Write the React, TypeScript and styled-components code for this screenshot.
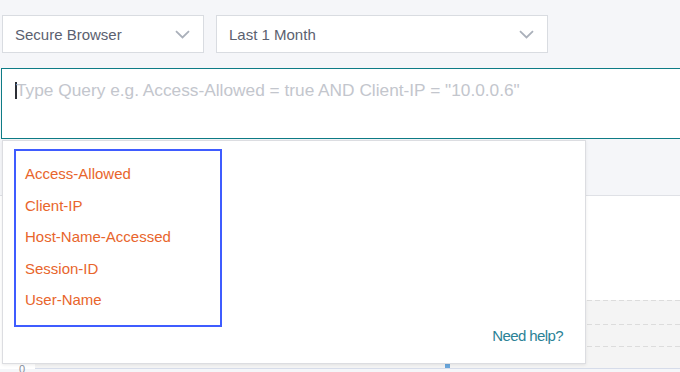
import styled, { createGlobalStyle } from "styled-components";

const GlobalStyle = createGlobalStyle`
  html, body {
    margin: 0;
    padding: 0;
    background-color: #f5f6f9;
    font-family: "Liberation Sans", Arial, sans-serif;
    overflow: hidden;
  }
  * {
    box-sizing: border-box;
  }
`

const Page = styled.div`
  width: 680px;
  height: 372px;
  padding-top: 15px;
  overflow: hidden;
  position: relative;
`

const FilterRow = styled.div`
  display: flex;
  gap: 12px;
  padding-left: 2px;
`

const Select = styled.div<{ $width: number }>`
  width: ${(p) => p.$width}px;
  height: 38px;
  background-color: #fff;
  border: 1px solid #d9dce1;
  padding: 0 13px 0 12px;
  display: flex;
  align-items: center;
  justify-content: space-between;
  font-size: 15px;
  color: #5b6170;
`

const Chevron = () => (
  <svg width="15" height="9" viewBox="0 0 15 9">
    <path d="M1 1.2 L7.5 7.4 L14 1.2" fill="none" stroke="#aab0ba" strokeWidth="1.8" />
  </svg>
)

const QueryArea = styled.div`
  position: relative;
  margin-top: 15px;
`

const QueryBox = styled.div`
  height: 71px;
  margin-left: 1px;
  margin-right: -4px;
  background-color: #fff;
  border: 1px solid #0e7c86;
  padding: 11px 0 0 13px;
  display: flex;
  align-items: flex-start;
  font-size: 17.3px;
  line-height: 21px;
  color: #c3c6cd;
  white-space: nowrap;
`

const Caret = styled.span`
  display: inline-block;
  width: 2px;
  height: 17px;
  margin-top: 2px;
  margin-right: -1px;
  background-color: #2c2f36;
`

const Band = styled.div`
  height: 57px;
  border-bottom: 1px solid #dfe1e6;
`

const ChartPanel = styled.div`
  background-color: #fff;
  padding-top: 104px;
`

const Grid = styled.div`
  position: relative;
  margin-left: 35px;
  background-color: #f4f4f4;
  height: 69px;
  border-bottom: 1px solid #d6dcea;
`

const GridLine = styled.div<{ $top: number }>`
  position: absolute;
  left: 0;
  right: 0;
  top: ${(p) => p.$top}px;
  height: 1px;
  background-image: linear-gradient(to right, #dcdcdc 0 5px, transparent 5px 8px);
  background-size: 8px 1px;
`

const AxisLabel = styled.span`
  position: absolute;
  left: -16px;
  top: 63px;
  font-size: 11px;
  line-height: 13px;
  color: #8a90a0;
`

const BarTip = styled.div`
  position: absolute;
  left: 410px;
  bottom: 0;
  width: 5px;
  height: 4px;
  background-color: #6aa7dc;
`

const Popup = styled.div`
  position: absolute;
  top: 72px;
  left: 2px;
  width: 584px;
  height: 224px;
  background-color: #fff;
  border: 1px solid #dcdde1;
  box-shadow: 0 1px 3px rgba(0, 0, 0, 0.08);
  padding: 8px 22px 19px 11px;
  display: flex;
  flex-direction: column;
  align-items: flex-start;
  z-index: 2;
`

const FieldList = styled.ul`
  list-style: none;
  margin: 0;
  width: 208px;
  height: 187px;
  border: 2px solid #3f5cff;
  padding: 7px 0 0 9px;
`

const FieldItem = styled.li`
  font-size: 15px;
  line-height: 31.5px;
  color: #e8652c;
`

const HelpLink = styled.a`
  align-self: flex-end;
  margin-top: auto;
  font-size: 15px;
  letter-spacing: -0.6px;
  color: #2b8296;
  text-decoration: none;
`

const fields = ["Access-Allowed", "Client-IP", "Host-Name-Accessed", "Session-ID", "User-Name"]

const App = () => {
  return (
    <>
      <GlobalStyle />
      <Page>
        <FilterRow>
          <Select $width={202}>
            Secure Browser
            <Chevron />
          </Select>
          <Select $width={332}>
            Last 1 Month
            <Chevron />
          </Select>
        </FilterRow>
        <QueryArea>
          <QueryBox>
            <Caret />
            Type Query e.g. Access-Allowed = true AND Client-IP = "10.0.0.6"
          </QueryBox>
          <Band />
          <ChartPanel>
            <Grid>
              <GridLine $top={0} />
              <GridLine $top={24} />
              <GridLine $top={46} />
              <AxisLabel>0</AxisLabel>
              <BarTip />
            </Grid>
          </ChartPanel>
          <Popup>
            <FieldList>
              {fields.map((f) => (
                <FieldItem key={f}>{f}</FieldItem>
              ))}
            </FieldList>
            <HelpLink href="#">Need help?</HelpLink>
          </Popup>
        </QueryArea>
      </Page>
    </>
  )
}

export default App
